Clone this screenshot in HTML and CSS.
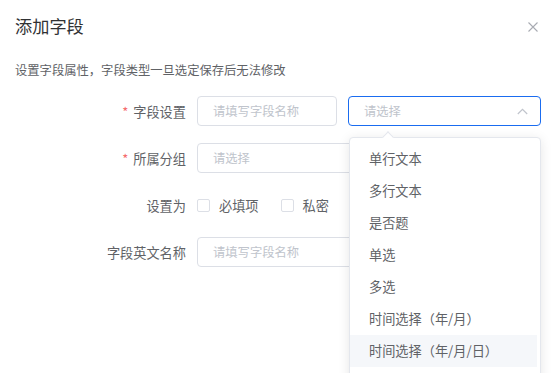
FILE: index.html
```html
<!DOCTYPE html>
<html lang="zh">
<head>
<meta charset="utf-8">
<link rel="stylesheet" href="styles.css">
</head>
<body>
<div class="dialog">
  <header class="head">
    <h2 class="title">添加字段</h2>
    <span class="close"><svg width="10" height="10" viewBox="0 0 10 10"><path d="M0.5 0.5 L9.5 9.5 M9.5 0.5 L0.5 9.5" stroke="#a8abb2" stroke-width="1.1" fill="none"/></svg></span>
  </header>
  <p class="desc">设置字段属性，字段类型一旦选定保存后无法修改</p>
  <div class="form">
    <div class="row">
      <label class="label"><span class="req">*</span>字段设置</label>
      <div class="ctrl split">
        <div class="input w-name"><span class="ph">请填写字段名称</span></div>
        <div class="input select active"><span class="ph">请选择</span>
          <svg class="chev" width="11" height="7" viewBox="0 0 11 7"><path d="M0.8 6 L5.5 1.3 L10.2 6" stroke="#c0c4cc" stroke-width="1.2" fill="none"/></svg>
        </div>
      </div>
    </div>
    <div class="row">
      <label class="label"><span class="req">*</span>所属分组</label>
      <div class="ctrl"><div class="input full"><span class="ph">请选择</span></div></div>
    </div>
    <div class="row">
      <label class="label">设置为</label>
      <div class="ctrl checks">
        <span class="check"><i class="box"></i>必填项</span>
        <span class="check"><i class="box"></i>私密</span>
      </div>
    </div>
    <div class="row">
      <label class="label">字段英文名称</label>
      <div class="ctrl"><div class="input full"><span class="ph">请填写字段名称</span></div></div>
    </div>
  </div>
  <div class="dropdown">
    <i class="arrow"></i>
    <ul class="options">
      <li>单行文本</li>
      <li>多行文本</li>
      <li>是否题</li>
      <li>单选</li>
      <li>多选</li>
      <li>时间选择（年/月）</li>
      <li class="hover">时间选择（年/月/日）</li>
    </ul>
  </div>
</div>
</body>
</html>
```
FILE: styles.css
```css
* { box-sizing: border-box; }
html, body { margin: 0; padding: 0; background: #fff; }
body {
  font-family: "Noto Sans CJK SC", "Noto Sans", sans-serif;
  width: 551px; height: 373px; overflow: hidden;
}
.dialog { position: relative; padding: 14px 10px 0 15px; height: 373px; }
.head { display: flex; justify-content: space-between; align-items: center; height: 24px; }
.title { margin: 0; font-size: 17.2px; font-weight: 400; color: #303133; line-height: 24px; }
.close { display: flex; width: 10px; height: 10px; margin-right: 3px; margin-top: 1px; }
.desc { margin: 23px 0 0; font-size: 12.3px; line-height: 18px; color: #606266; }
.form { margin-top: 17px; display: flex; flex-direction: column; gap: 17px; }
.row { display: flex; align-items: center; height: 30px; }
.label { width: 171px; margin-right: 11px; text-align: right; font-size: 13.2px; color: #606266; }
.req { color: #f56c6c; margin-right: 5px; font-size: 13px; }
.ctrl { flex: 1; display: flex; align-items: center; }
.split { gap: 11px; }
.input { height: 30px; border: 1px solid #dcdfe6; border-radius: 4px; display: flex; align-items: center; padding: 0 15px; }
.w-name { width: 140px; }
.select { flex: 1; justify-content: space-between; padding-right: 12px; }
.active { border-color: #1a6cf0; }
.full { flex: 1; }
.ph { font-size: 12.3px; color: #c0c4cc; white-space: nowrap; }
.chev { display: block; }
.check { display: flex; align-items: center; font-size: 13.2px; color: #606266; margin-right: 22px; }
.box { display: block; width: 13px; height: 13px; border: 1px solid #dcdfe6; border-radius: 2px; margin: 0 9px 0 0; }
.dropdown {
  position: absolute; left: 349px; top: 137px; width: 192px; height: 250px;
  background: #fff; border: 1px solid #e4e7ed; border-radius: 4px;
  box-shadow: 0 2px 12px rgba(0,0,0,0.10);
}
.arrow {
  position: absolute; top: -5px; left: 34px; width: 8px; height: 8px;
  background: #fff; border-left: 1px solid #e4e7ed; border-top: 1px solid #e4e7ed;
  transform: rotate(45deg);
}
.options { list-style: none; margin: 0; padding: 5px 3px 0 0; }
.options li { height: 32px; line-height: 32px; padding-left: 19px; font-size: 13.2px; color: #606266; white-space: nowrap; }
.options li.hover { background: #f5f7fa; }
```
